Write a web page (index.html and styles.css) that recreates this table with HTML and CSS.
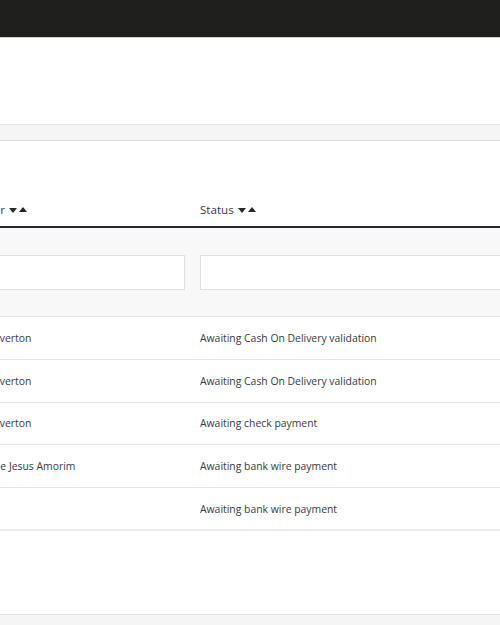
FILE: index.html
```html
<!DOCTYPE html>
<html>
<head>
<meta charset="utf-8">
<link rel="stylesheet" href="styles.css">
</head>
<body>
<header class="topbar"></header>
<div class="toolbar"></div>
<div class="band"></div>
<div class="panel">
  <div class="table">
    <div class="row head">
      <div class="cell"><span class="label">Customer</span><span class="sort"><svg width="8" height="6" viewBox="0 0 8 6"><path d="M0 1h8L4 6z" fill="#25282c"/></svg><svg width="8" height="6" viewBox="0 0 8 6"><path d="M0 5h8L4 0z" fill="#25282c"/></svg></span></div>
      <div class="cell"><span class="label">Status</span><span class="sort"><svg width="8" height="6" viewBox="0 0 8 6"><path d="M0 1h8L4 6z" fill="#25282c"/></svg><svg width="8" height="6" viewBox="0 0 8 6"><path d="M0 5h8L4 0z" fill="#25282c"/></svg></span></div>
    </div>
    <div class="row filters">
      <div class="cell"><input class="input" type="text"></div>
      <div class="cell"><input class="input" type="text"></div>
    </div>
    <div class="row body">
      <div class="cell">Everton</div>
      <div class="cell">Awaiting Cash On Delivery validation</div>
    </div>
    <div class="row body">
      <div class="cell">Everton</div>
      <div class="cell">Awaiting Cash On Delivery validation</div>
    </div>
    <div class="row body">
      <div class="cell">Everton</div>
      <div class="cell">Awaiting check payment</div>
    </div>
    <div class="row body">
      <div class="cell">de Jesus Amorim</div>
      <div class="cell">Awaiting bank wire payment</div>
    </div>
    <div class="row body last">
      <div class="cell"></div>
      <div class="cell">Awaiting bank wire payment</div>
    </div>
  </div>
  <div class="spacer"></div>
</div>
<div class="footer"></div>
</body>
</html>
```
FILE: styles.css
```css
* { box-sizing: border-box; }
html, body { margin: 0; padding: 0; }
body {
  width: 500px;
  height: 625px;
  overflow: hidden;
  background: #fff;
  font-family: "Open Sans", "Noto Sans", sans-serif;
  color: #363a41;
}
.topbar {
  height: 38px;
  background: #1f1f1e;
  border-bottom: 1px solid #cfcfcf;
}
.toolbar { height: 86px; background: #fff; }
.band {
  height: 17px;
  background: #f5f5f5;
  border-top: 1px solid #e6e6e6;
  border-bottom: 1px solid #dcdcdc;
}
.panel { background: #fff; }
.table { margin-left: -51px; width: 700px; }
.row {
  display: grid;
  grid-template-columns: 236px 1fr;
  column-gap: 15px;
}
.cell { padding-left: 45px; white-space: nowrap; }
.row .cell:last-child { padding-left: 0; }
.head {
  height: 87px;
  align-items: end;
  padding-bottom: 9px;
  border-bottom: 2px solid #25282c;
  font-size: 11.6px;
}
.head .cell { padding-left: 3px; display: flex; align-items: center; }
.head .cell:last-child { padding-left: 0; }
.label { color: #363a41; }
.sort { display: inline-flex; gap: 2px; margin-left: 4px; align-items: center; }
.sort svg { display: block; }
.filters {
  height: 89px;
  background: #f8f8f8;
  align-items: center;
  border-bottom: 1px solid #e3e3e3;
  padding-top: 1px;
}
.filters .cell { padding-left: 0; }
.input {
  display: block;
  width: 100%;
  height: 35px;
  border: 1px solid #e0e0e0;
  background: #fff;
  margin: 0;
  padding: 0;
}
.body {
  height: 42.8px;
  align-items: center;
  border-bottom: 1px solid #e6e6e6;
  font-size: 10.4px;
}
.body.last { border-bottom: 2px solid #ececec; }
.spacer { height: 83px; }
.footer {
  height: 12px;
  background: #f5f5f5;
  border-top: 1px solid #e3e3e3;
}
```
